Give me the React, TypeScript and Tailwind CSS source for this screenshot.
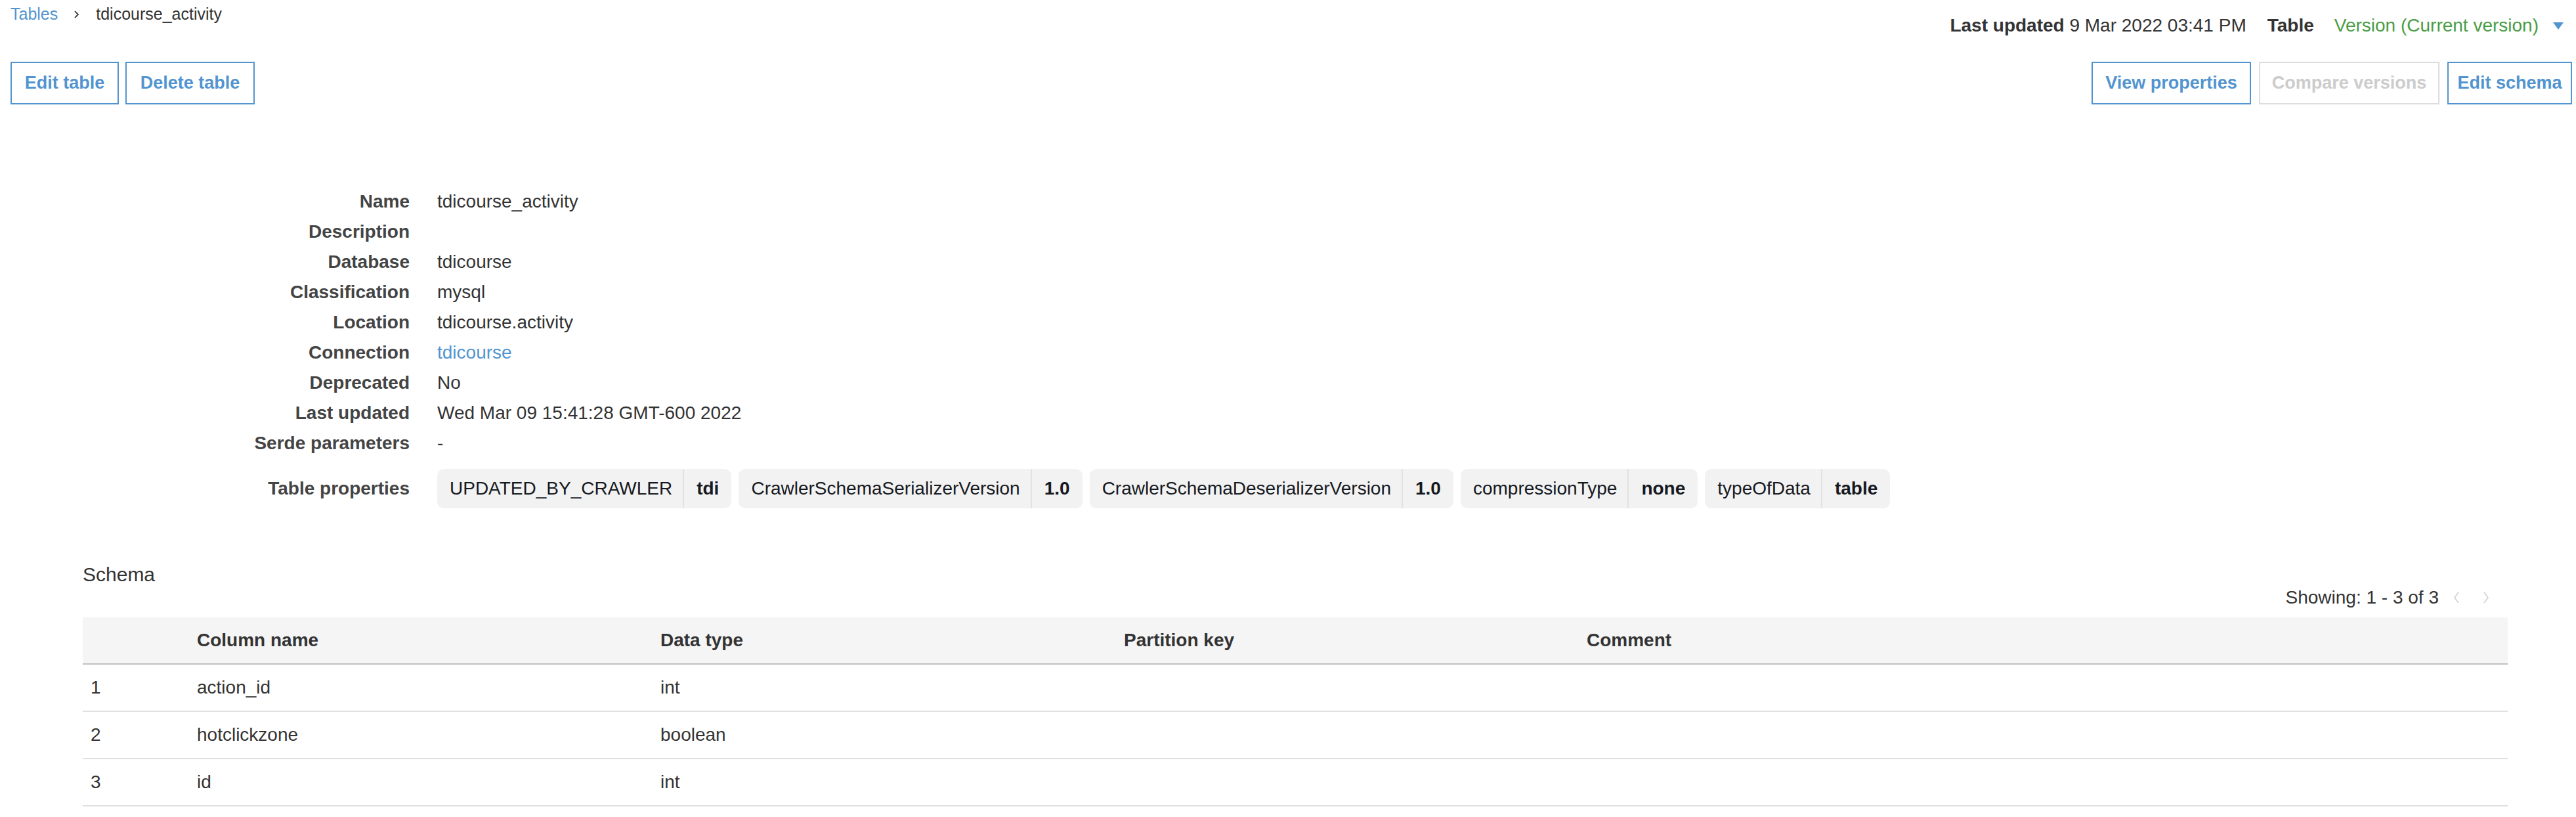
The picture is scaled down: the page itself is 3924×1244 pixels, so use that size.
import React from "react";

const details: { label: string; value: React.ReactNode }[] = [
  { label: "Name", value: "tdicourse_activity" },
  { label: "Description", value: "" },
  { label: "Database", value: "tdicourse" },
  { label: "Classification", value: "mysql" },
  { label: "Location", value: "tdicourse.activity" },
  { label: "Connection", value: <span className="text-[#5294cf]">tdicourse</span> },
  { label: "Deprecated", value: "No" },
  { label: "Last updated", value: "Wed Mar 09 15:41:28 GMT-600 2022" },
  { label: "Serde parameters", value: "-" },
];

const props: [string, string][] = [
  ["UPDATED_BY_CRAWLER", "tdi"],
  ["CrawlerSchemaSerializerVersion", "1.0"],
  ["CrawlerSchemaDeserializerVersion", "1.0"],
  ["compressionType", "none"],
  ["typeOfData", "table"],
];

const rows: [string, string, string][] = [
  ["1", "action_id", "int"],
  ["2", "hotclickzone", "boolean"],
  ["3", "id", "int"],
];

function Btn({ children, disabled, w }: { children: React.ReactNode; disabled?: boolean; w: string }) {
  return (
    <button
      className={
        (disabled
          ? "h-[65px] border-2 border-[#dddddd] text-[#cccccc] font-bold bg-white leading-none text-[27px] flex items-center justify-center "
          : "h-[65px] border-2 border-[#5294cf] text-[#5294cf] font-bold bg-white leading-none text-[27px] flex items-center justify-center ") + w
      }
    >
      {children}
    </button>
  );
}

export default function App() {
  return (
    <div className="w-[3924px] h-[1244px] bg-white overflow-hidden font-['Liberation_Sans',Arial,sans-serif] text-[28px] text-[#333333]">
      {/* Top area */}
      <div className="flex justify-between pl-[16px] pr-[6px]">
        <div className="flex flex-col">
          <div className="h-[44px] flex items-center text-[25px]">
            <span className="text-[#5294cf]">Tables</span>
            <svg width="9" height="14" viewBox="0 0 9 14" className="ml-[24px] mr-[25px]">
              <path d="M2 2 L7 7 L2 12" fill="none" stroke="#444" strokeWidth="1.8" />
            </svg>
            <span>tdicourse_activity</span>
          </div>
          <div className="mt-[50px] flex gap-[10px]">
            <Btn w="w-[165px]">Edit table</Btn>
            <Btn w="w-[197px]">Delete table</Btn>
          </div>
        </div>
        <div className="flex flex-col items-end">
          <div className="mt-[19px] h-[40px] flex items-center pr-[13px]">
            <span className="font-bold">Last updated</span>
            <span>&nbsp;9 Mar 2022 03:41 PM</span>
            <span className="font-bold ml-[32px]">Table</span>
            <span className="ml-[31px] text-[#4a9d45]">Version (Current version)</span>
            <svg width="16" height="11" viewBox="0 0 16 11" className="ml-[22px]">
              <path d="M0 0 L16 0 L8 11 Z" fill="#5294cf" />
            </svg>
          </div>
          <div className="mt-[35px] flex gap-[12px]">
            <Btn w="w-[243px]">View properties</Btn>
            <Btn w="w-[275px]" disabled>Compare versions</Btn>
            <Btn w="w-[190px]">Edit schema</Btn>
          </div>
        </div>
      </div>

      {/* Details */}
      <div className="mt-[125px] grid grid-cols-[624px_1fr] gap-x-[42px]">
        {details.map((d) => (
          <React.Fragment key={d.label}>
            <div className="text-right font-bold text-[#444444] leading-[46px]">{d.label}</div>
            <div className="leading-[46px] text-[#333333]">{d.value}</div>
          </React.Fragment>
        ))}
        <div className="mt-[16px] text-right font-bold text-[#444444] flex items-center justify-end">
          Table properties
        </div>
        <div className="mt-[16px] flex gap-[11px]">
          {props.map(([k, v]) => (
            <div key={k} className="h-[60px] flex items-stretch rounded-[10px] bg-[#f2f2f2] text-[#16191f]">
              <div className="pl-[19px] pr-[16px] flex items-center">{k}</div>
              <div className="w-[2px] bg-[#e2e2e2]" />
              <div className="px-[19px] flex items-center font-bold">{v}</div>
            </div>
          ))}
        </div>
      </div>

      {/* Schema */}
      <div className="mt-[81px] pl-[126px] pr-[104px]">
        <div className="h-[85px] flex justify-between">
          <div className="self-start text-[30px] leading-[40px] text-[#333333]">Schema</div>
          <div className="self-end mb-[10px] h-[40px] flex items-center pr-[28px]">
            <span>Showing: 1 - 3 of 3</span>
            <svg width="10" height="20" viewBox="0 0 10 20" className="ml-[22px]">
              <path d="M8 2 L2 10 L8 18" fill="none" stroke="#d0d0d0" strokeWidth="1.6" />
            </svg>
            <svg width="10" height="20" viewBox="0 0 10 20" className="ml-[35px]">
              <path d="M2 2 L8 10 L2 18" fill="none" stroke="#d0d0d0" strokeWidth="1.6" />
            </svg>
          </div>
        </div>
        <div className="grid grid-cols-[162px_706px_706px_705px_1fr] h-[72px] bg-[#f5f5f5] border-b-2 border-[#c0c0c0] font-bold text-[#333333]">
          <div className="pl-[12px] flex items-center"></div>
          <div className="pl-[12px] flex items-center">Column name</div>
          <div className="pl-[12px] flex items-center">Data type</div>
          <div className="pl-[12px] flex items-center">Partition key</div>
          <div className="pl-[12px] flex items-center">Comment</div>
        </div>
        {rows.map(([n, name, type]) => (
          <div
            key={n}
            className="grid grid-cols-[162px_706px_706px_705px_1fr] h-[72px] border-b-2 border-[#e0e0e0] text-[#333333]"
          >
            <div className="pl-[12px] flex items-center">{n}</div>
            <div className="pl-[12px] flex items-center">{name}</div>
            <div className="pl-[12px] flex items-center">{type}</div>
            <div className="pl-[12px] flex items-center"></div>
            <div className="pl-[12px] flex items-center"></div>
          </div>
        ))}
      </div>
    </div>
  );
}
